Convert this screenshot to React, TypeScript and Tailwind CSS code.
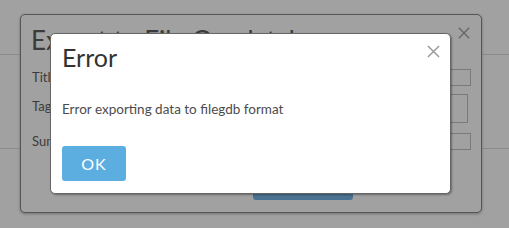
import React from 'react';

const Cross: React.FC<{ className?: string }> = ({ className }) => (
  <svg viewBox="0 0 14 14" className={className} fill="none" stroke="currentColor" strokeWidth="1.6">
    <path d="M1 1 L13 13 M13 1 L1 13" />
  </svg>
);

const App: React.FC = () => {
  return (
    <div
      className="relative w-[509px] h-[228px] overflow-hidden bg-[#a1a1a1]"
      style={{ fontFamily: 'Lato, "Open Sans", sans-serif' }}
    >
      {/* page behind the overlay */}
      <div className="flex flex-col">
        <div className="h-[55px] border-b border-[#8c8c8c]" />
        <div className="h-[94px] border-b border-[#8c8c8c]" />
      </div>

      {/* dimmed export dialog */}
      <div className="absolute left-[20px] top-[14px] w-[462px] h-[199px] rounded-[5px] border border-[#555] bg-[#a1a1a1] shadow-[0_1px_3px_rgba(0,0,0,0.3)]">
        <div className="flex items-start justify-between pl-[10px] pr-[11px] pt-[9px]">
          <h1 className="text-[26px] leading-[32px] text-[#3b3b3b] whitespace-nowrap">Export to File Geodatabase</h1>
          <Cross className="w-[12px] h-[12px] mt-[3px] text-[#666]" />
        </div>
        <div className="flex flex-col mt-[13px] pl-[11px] text-[13px] text-[#3b3b3b]">
          <div className="flex items-center justify-between h-[17px] pr-[10px]">
            <span>Title</span>
            <div className="w-[200px] h-[17px] border border-[#7a7a7a]" />
          </div>
          <div className="flex items-start justify-between h-[29px] mt-[8px] pr-[13px]">
            <span className="mt-[3px]">Tags</span>
            <div className="w-[200px] h-[29px] border border-[#7a7a7a]" />
          </div>
          <div className="flex items-center justify-between h-[17px] mt-[10px] pr-[10px]">
            <span>Summary</span>
            <div className="w-[200px] h-[17px] border border-[#7a7a7a]" />
          </div>
        </div>
        <div className="flex justify-end mt-[33px] pr-[128px]">
          <div className="w-[100px] h-[17px] rounded-[3px] bg-[#4b7391]" />
        </div>
      </div>

      {/* error dialog */}
      <div className="absolute left-[50px] top-[33px] w-[401px] h-[161px] rounded-[5px] border border-[#666] bg-white shadow-[1px_1px_2px_rgba(0,0,0,0.35)] flex flex-col">
        <div className="flex items-start justify-between pl-[11px] pr-[10px] pt-[7px]">
          <h2 className="text-[25px] leading-[32px] text-[#333]">Error</h2>
          <Cross className="w-[13px] h-[13px] mt-[4px] text-[#999]" />
        </div>
        <p className="mt-[27px] pl-[11px] text-[13.5px] leading-[18px] text-[#4c4c4c]">
          Error exporting data to filegdb format
        </p>
        <div className="mt-[28px] pl-[11px]">
          <button className="w-[64px] h-[35px] rounded-[3px] bg-[#5daee0] text-white text-[16px] tracking-[1px]">
            OK
          </button>
        </div>
      </div>
    </div>
  );
};

export default App;
